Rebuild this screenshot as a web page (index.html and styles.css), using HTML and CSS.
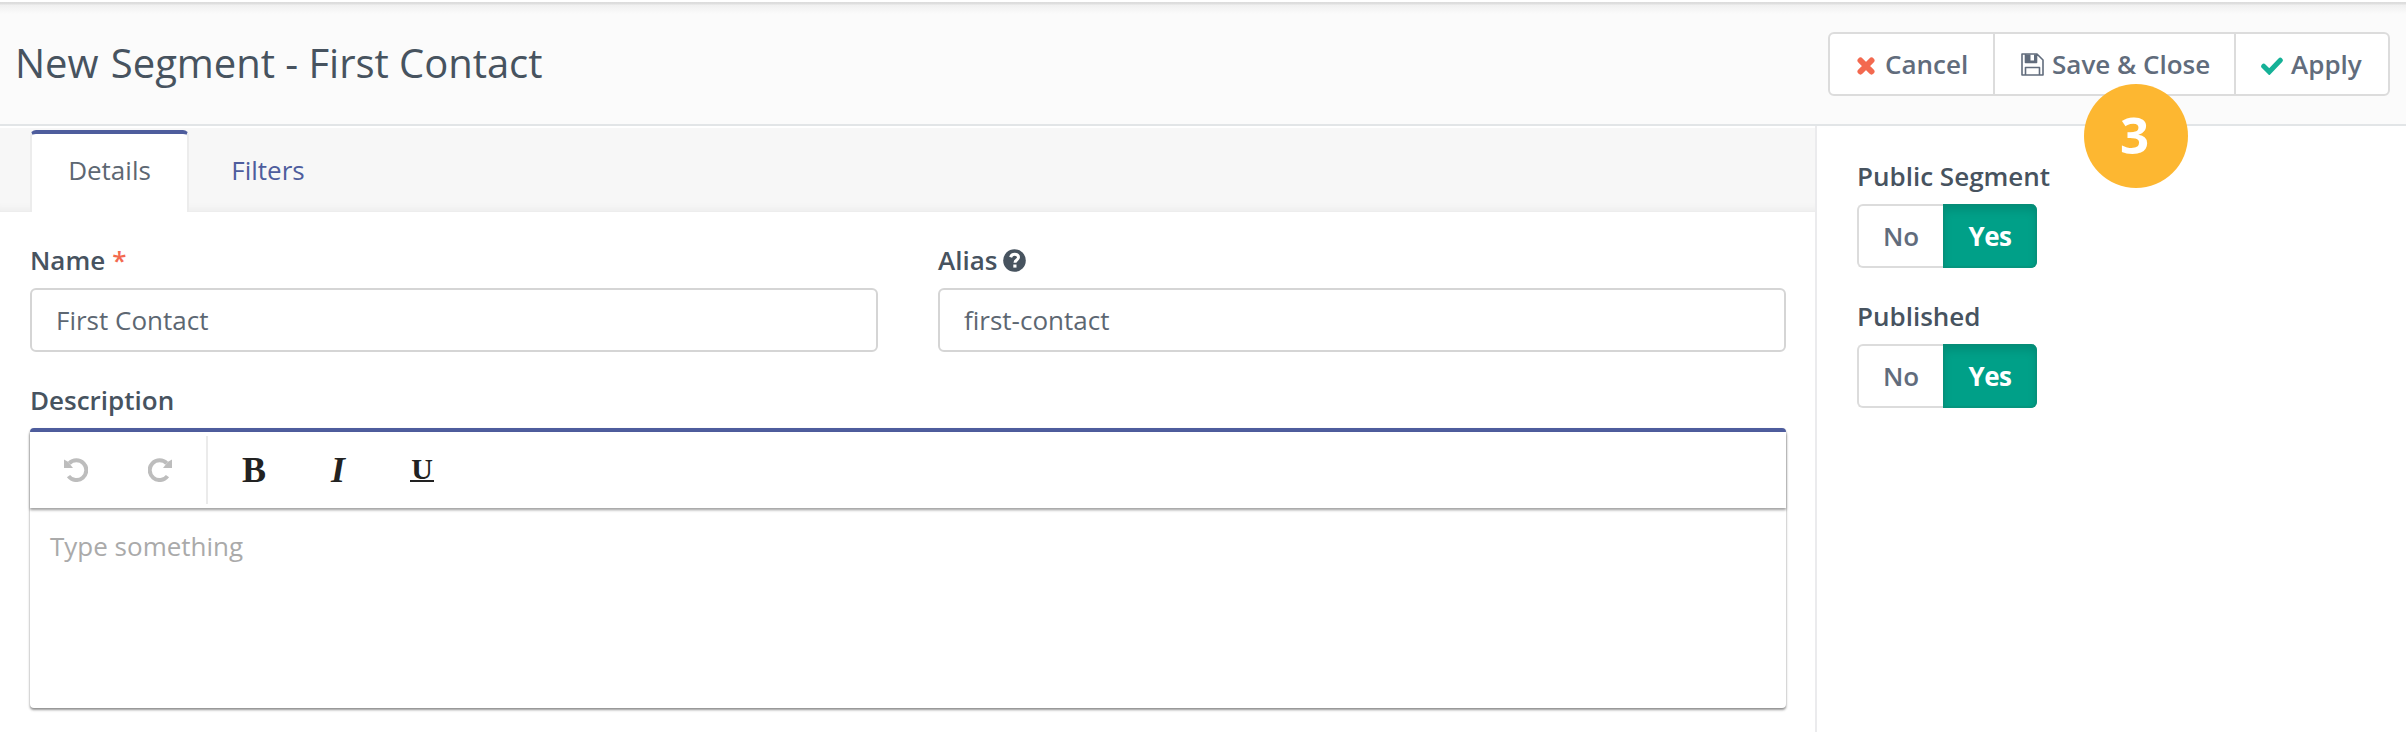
FILE: index.html
```html
<!DOCTYPE html>
<html lang="en">
<head>
<meta charset="utf-8">
<title>New Segment - First Contact</title>
<link rel="stylesheet" href="styles.css">
</head>
<body>
<div class="page">
  <header class="header">
    <h1 class="title"><span class="title-lead">New</span> <span>Segment - First Contact</span></h1>
    <div class="actions">
      <button class="btn cancel"><svg class="icon" width="18" height="18" viewBox="0 0 18 18"><path d="M3.500 3.500l11 11M14.500 3.500l-11 11" stroke="#f3694f" stroke-width="6" stroke-linecap="round"/></svg><span>Cancel</span></button>
      <button class="btn save"><svg class="icon disk" width="23" height="23" viewBox="0 0 23 23" fill="none" stroke="#616c7c" stroke-width="1.600" stroke-linejoin="round"><path d="M1 1h15l6 6v15H1zM4.500 1v8.500h11V1M4.500 22v-7.500h14V22"/><path d="M5 1.500h4.500V8H5zM13 1.500h2.500V9H5V7.500h8z" fill="#616c7c" stroke="none"/></svg><span>Save &amp; Close</span></button>
      <button class="btn apply"><svg class="icon" width="22" height="18" viewBox="0 0 22 18"><path d="M2.700 9.200l5.600 5.600L19.300 3.200" fill="none" stroke="#15b197" stroke-width="5" stroke-linecap="round"/></svg><span>Apply</span></button>
    </div>
    <div class="step">3</div>
  </header>
  <div class="content">
    <main class="main">
      <nav class="tabs">
        <a class="tab active">Details</a>
        <a class="tab">Filters</a>
      </nav>
      <form class="form">
        <div class="row">
          <div class="field">
            <label class="label" for="name">Name <span class="required">*</span></label>
            <input class="input" id="name" value="First Contact">
          </div>
          <div class="field">
            <label class="label" for="alias">Alias <svg class="help" width="23" height="23" viewBox="0 0 23 23"><circle cx="11.500" cy="11.500" r="11.300" fill="#47535f"/><path d="M7.600 8.300C8.200 6.300 9.500 5.300 11.700 5.300c2.300 0 3.800 1.200 3.800 3 0 2.800-3.500 2.700-3.500 5.400" fill="none" stroke="#fff" stroke-width="3"/><path d="M10.300 15.500h3.200v3.100h-3.200z" fill="#fff"/></svg></label>
            <input class="input" id="alias" value="first-contact">
          </div>
        </div>
        <div class="label description">Description</div>
        <div class="editor">
          <div class="toolbar">
            <span class="tool"><svg width="24" height="24" viewBox="0 0 24 24"><path d="M5.200 5.300A9.900 9.900 0 1 1 4.500 18.100" fill="none" stroke="#bdbdbd" stroke-width="4"/><path d="M0 1.500V10h9L6.800 7.200 3.500 3.500z" fill="#bdbdbd"/></svg></span>
            <span class="tool"><svg class="flip" width="24" height="24" viewBox="0 0 24 24"><path d="M5.200 5.300A9.900 9.900 0 1 1 4.500 18.100" fill="none" stroke="#bdbdbd" stroke-width="4"/><path d="M0 1.500V10h9L6.800 7.200 3.500 3.500z" fill="#bdbdbd"/></svg></span>
            <span class="separator"></span>
            <span class="tool glyph">B</span>
            <span class="tool glyph italic">I</span>
            <span class="tool glyph"><span class="underline">U</span></span>
          </div>
          <div class="editor-body">Type something</div>
        </div>
      </form>
    </main>
    <aside class="sidebar">
      <div class="label side-label">Public Segment</div>
      <div class="toggle"><span class="no">No</span><span class="yes">Yes</span></div>
      <div class="label side-label">Published</div>
      <div class="toggle"><span class="no">No</span><span class="yes">Yes</span></div>
    </aside>
  </div>
</div>
</body>
</html>
```

FILE: styles.css
```css
* { box-sizing: border-box; }
body { margin: 0; background: #fff; font-family: "Open Sans", sans-serif; font-size: 26px; color: #5d6772; }
.page { height: 732px; overflow: hidden; display: flex; flex-direction: column; padding-top: 2px; }
.header { position: relative; height: 124px; flex: none; display: flex; justify-content: space-between; padding: 30px 16px 0 15px; background: linear-gradient(#dcdcdc 0, #dfdfdf 2px, #f0f0f0 3px, #fbfbfb 12px); border-bottom: 2px solid #e2e5e7; }
.title { margin: 0; font-size: 40px; line-height: 62px; font-weight: 400; color: #47535f; white-space: nowrap; letter-spacing: -.04px; }
.title-lead { margin-right: 2px; }
.actions { display: flex; height: 64px; border: 2px solid #dcdcdc; border-radius: 6px; background: #fff; }
.btn { display: flex; align-items: center; margin: 0; padding: 0; border: 0; background: none; font: 600 26px "Open Sans", sans-serif; color: #616c7c; white-space: nowrap; }
.btn + .btn { border-left: 2px solid #dcdcdc; }
.cancel { width: 163px; padding-left: 27px; gap: 10px; }
.save { width: 241px; padding-left: 26px; gap: 8px; }
.apply { width: 154px; padding-left: 25px; gap: 8px; }
.icon { flex: none; margin-top: 3px; }
.disk { margin-top: 1px; }
.step { position: absolute; left: 2084px; top: 82px; width: 104px; height: 104px; border-radius: 50%; background: #fdb731; color: #fff; font-size: 51px; font-weight: 700; line-height: 101px; text-align: center; padding-right: 3px; }
.content { display: flex; flex: 1; }
.main { width: 1817px; padding-top: 2px; border-right: 2px solid #ebebed; }
.tabs { display: flex; height: 84px; padding: 2px 0 0 30px; background: #f7f7f7; box-shadow: inset 0 -9px 9px -8px #e6e6e6; }
.tab { width: 158px; padding: 0 0 3px 0; display: flex; align-items: center; justify-content: center; color: #4e5d9d; }
.active { width: 159px; color: #5d6772; background: #fff; border-top: 4px solid #4e5d9d; border-left: 2px solid #ececec; border-right: 2px solid #ececec; border-radius: 6px 6px 0 0; padding-bottom: 7px; }
.form { padding: 30px 29px 0 30px; }
.row { display: grid; grid-template-columns: 848px 848px; gap: 60px; }
.label { display: flex; align-items: center; height: 36px; font-weight: 600; color: #47535f; }
.required { color: #f3694f; margin-left: 7px; }
.help { margin: 1px 0 0 6px; }
.input { display: block; width: 100%; height: 64px; margin-top: 10px; padding: 0 24px; border: 2px solid #d5d5d5; border-radius: 6px; background: #fff; font: 400 26px "Open Sans", sans-serif; color: #5d6772; outline: 0; }
.description { margin-top: 30px; }
.editor { width: 1756px; height: 280px; margin-top: 10px; border-radius: 4px; border-top: 4px solid #4e5d9d; box-shadow: 0 2px 3px rgba(0,0,0,.24), 0 2px 2px rgba(0,0,0,.18), 0 1px 2px rgba(0,0,0,.12); background: #fff; }
.toolbar { display: flex; height: 76px; padding-left: 4px; box-shadow: 0 2px 3px rgba(0,0,0,.24), 0 2px 2px rgba(0,0,0,.18); }
.tool { width: 84px; height: 76px; display: flex; align-items: center; justify-content: center; }
.flip { transform: scaleX(-1); }
.separator { width: 2px; height: 68px; margin: 4px 4px 0; background: #ebebeb; }
.glyph { font: 700 36px/76px "Liberation Serif", serif; color: #222; }
.italic { font-style: italic; }
.underline { width: 24px; height: 24px; border-bottom: 2px solid #222; font-size: 30px; line-height: 21px; display: flex; justify-content: center; }
.editor-body { padding: 20px; line-height: 36px; color: #aaa; }
.sidebar { flex: 1; padding: 32px 0 0 40px; }
.side-label { height: 36px; margin-bottom: 10px; }
.toggle { display: flex; width: 180px; height: 64px; margin-bottom: 30px; font-weight: 600; line-height: 60px; text-align: center; color: #616c7c; }
.no { width: 86px; border: 2px solid #dcdcdc; border-right: 0; border-radius: 6px 0 0 6px; }
.yes { width: 94px; padding-top: 2px; border-radius: 0 6px 6px 0; background: #00a088; color: #fff; font-weight: 700; letter-spacing: -.5px; box-shadow: inset 0 0 0 2px rgba(10,140,118,.5), inset 0 6px 10px rgba(0,0,0,.125); }
```
